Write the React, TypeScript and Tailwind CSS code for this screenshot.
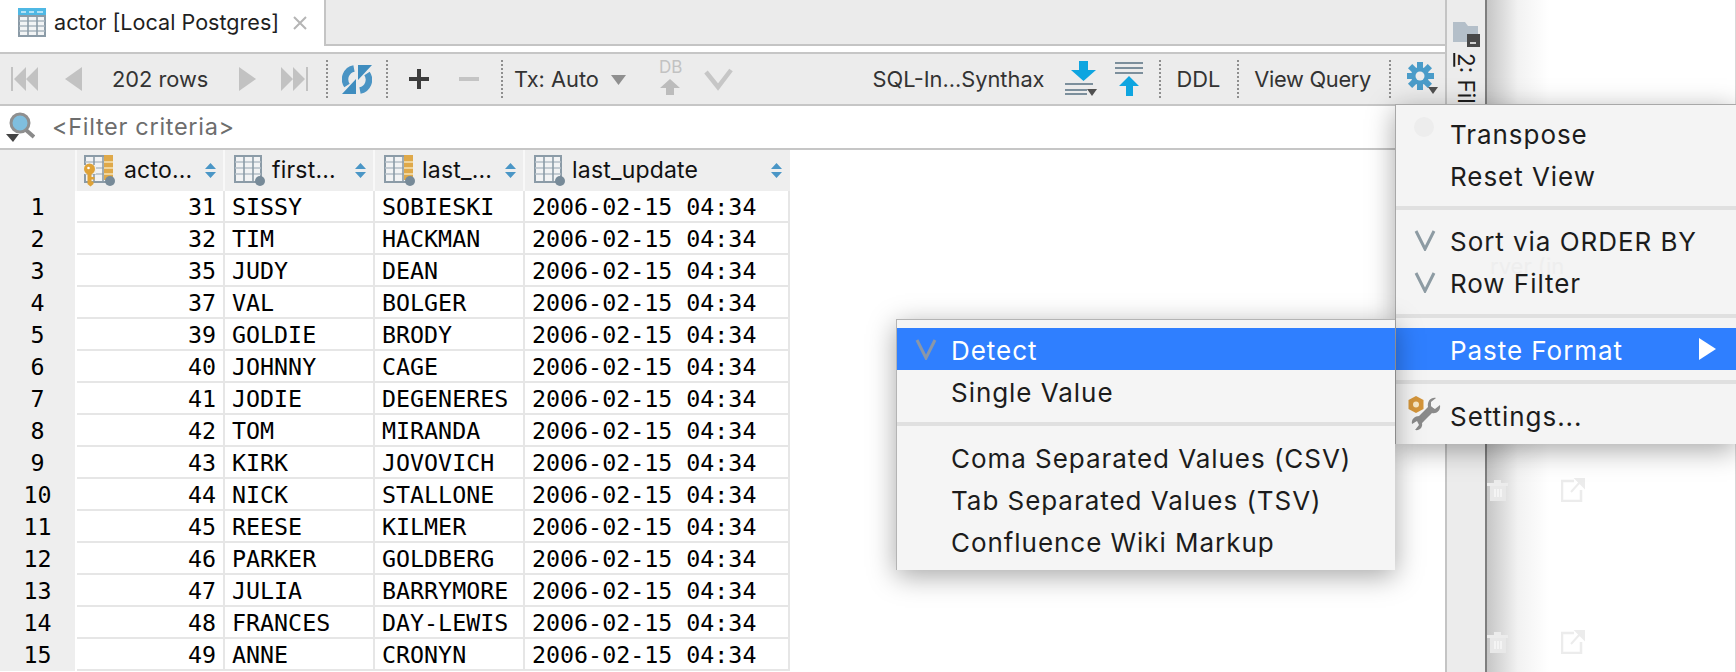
import React from 'react';

const rows = [
  [31, 'SISSY', 'SOBIESKI'],
  [32, 'TIM', 'HACKMAN'],
  [35, 'JUDY', 'DEAN'],
  [37, 'VAL', 'BOLGER'],
  [39, 'GOLDIE', 'BRODY'],
  [40, 'JOHNNY', 'CAGE'],
  [41, 'JODIE', 'DEGENERES'],
  [42, 'TOM', 'MIRANDA'],
  [43, 'KIRK', 'JOVOVICH'],
  [44, 'NICK', 'STALLONE'],
  [45, 'REESE', 'KILMER'],
  [46, 'PARKER', 'GOLDBERG'],
  [47, 'JULIA', 'BARRYMORE'],
  [48, 'FRANCES', 'DAY-LEWIS'],
  [49, 'ANNE', 'CRONYN'],
];

function TableIcon() {
  return (
    <svg width="28" height="29" viewBox="0 0 28 29" className="shrink-0">
      <rect x="0" y="0" width="28" height="8" fill="#4fb8e4" />
      <path d="M3 4h5M11 4h5M19 4h6" stroke="#d8f0fa" strokeWidth="1.5" />
      <rect x="1" y="8" width="26" height="20" fill="#f2f4f5" stroke="#8b9ba7" strokeWidth="2" />
      <path d="M1 13h26M1 18h26M1 23h26" stroke="#a9b5be" strokeWidth="1.6" />
      <path d="M10 8v20M19 8v20" stroke="#8b9ba7" strokeWidth="1.6" />
    </svg>
  );
}

function ColumnIcon({ keyed, marked }: { keyed?: boolean; marked?: boolean }) {
  return (
    <svg width="32" height="32" viewBox="0 0 32 32" className="shrink-0">
      <rect x="1" y="1" width="26" height="26" fill="#f2f3f4" stroke="#8b9ba7" strokeWidth="2" />
      <path d="M1 7h26M1 13h26M1 19h26" stroke="#b4bec6" strokeWidth="1.6" />
      <path d="M10 1v26M19 1v26" stroke="#8b9ba7" strokeWidth="1.6" />
      {marked && (
        <>
          <rect x="20" y="0" width="9" height="25" fill="#dfa94a" />
          <path d="M20 7h9M20 13h9M20 19h9" stroke="#f6e3b8" strokeWidth="1.6" />
        </>
      )}
      {keyed && (
        <>
          <rect x="0" y="10" width="12" height="9" fill="#eeeeee" />
          <circle cx="5.500" cy="14" r="5.500" fill="#dfa237" />
          <circle cx="4.500" cy="13" r="1.300" fill="#fff" />
          <path d="M3.500 17h4v5h3v2.500h-3v2h2V29l-3 2.500L3.500 29z" fill="#dfa237" />
        </>
      )}
      <circle cx="26" cy="26" r="5" fill="#778a98" />
    </svg>
  );
}

function SortIcon() {
  return (
    <svg width="11" height="15" viewBox="0 0 11 15" className="shrink-0">
      <path d="M5.5 0 11 6H0zM0 9h11l-5.5 6z" fill="#4a96c6" />
    </svg>
  );
}

function Dots() {
  return <div className="h-[38px] w-0 shrink-0 border-l-2 border-dotted border-[#8e8e8e]" />;
}

function Check({ color = '#8d9ba3' }: { color?: string }) {
  return (
    <svg width="22" height="22" viewBox="0 0 22 22">
      <path d="M2 2 11 20 20 2" fill="none" stroke={color} strokeWidth="3" />
    </svg>
  );
}

function MenuItem({
  label,
  active,
  check,
  icon,
  arrow,
  textLeft,
}: {
  label: string;
  active?: boolean;
  check?: boolean;
  icon?: React.ReactNode;
  arrow?: boolean;
  textLeft: string;
}) {
  return (
    <div
      className={`relative flex h-[42px] items-center pt-[2px] text-[26px] tracking-[0.95px] ${textLeft} ${
        active ? 'bg-[#2f7fff] text-white' : 'text-[#1c1c1c]'
      }`}
    >
      {check && (
        <span className="absolute left-[18px] top-[10px]">
          <Check color={active ? '#8a97a8' : '#8d9ba3'} />
        </span>
      )}
      {icon}
      {label}
      {arrow && (
        <svg width="17" height="22" viewBox="0 0 17 22" className="absolute right-[20px] top-[10px]">
          <path d="M0 0 17 11 0 22z" fill="#fff" />
        </svg>
      )}
    </div>
  );
}

function Trash() {
  return (
    <svg width="24" height="24" viewBox="0 0 24 24">
      <path d="M0 5h21v3H0zM7 2h7v3H7z" fill="#ececec" />
      <path d="M3 8h16v15H3z" fill="#e8e8e8" />
      <path d="M8 11v8M11 11v8M14 11v8" stroke="#f8f8f8" strokeWidth="1.5" />
    </svg>
  );
}

function External() {
  return (
    <svg width="24" height="24" viewBox="0 0 24 24">
      <path d="M13 3H1v20h19V12" fill="none" stroke="#ececec" strokeWidth="2.5" />
      <path d="M10 14 19 4M15 1h8v8z" fill="#ececec" stroke="#ececec" strokeWidth="2" />
    </svg>
  );
}

export default function App() {
  return (
    <div className="relative flex h-[672px] w-[1736px] overflow-hidden bg-white font-['Inter',sans-serif] text-[#2b2b2b]">
      {/* editor */}
      <div className="flex w-[1445px] shrink-0 flex-col">
        {/* tabs */}
        <div className="flex h-[46px] shrink-0">
          <div className="flex w-[324px] items-center bg-white pb-[2px] pl-[18px] text-[21.6px] text-[#1f1f1f]">
            <TableIcon />
            <span className="ml-[8px]">actor [Local Postgres]</span>
            <svg width="14" height="14" viewBox="0 0 14 14" className="ml-[14px] mt-[2px]">
              <path d="M1 1l12 12M13 1 1 13" stroke="#b5b5b5" strokeWidth="2" />
            </svg>
          </div>
          <div className="flex-1 border-b-2 border-l-2 border-[#c4c4c4] bg-[#ebebeb]" />
        </div>
        <div className="h-[6px] shrink-0 bg-white" />

        {/* toolbar */}
        <div className="flex h-[54px] shrink-0 items-center whitespace-nowrap border-y-2 border-[#c6c6c6] bg-[#ececec] text-[21.8px] text-[#333]">
          <svg width="27" height="24" viewBox="0 0 27 24" className="ml-[11px]">
            <path d="M0 0h2v24H0zM15 0v24L3 12zM27 0v24L15 12z" fill="#c2c2c2" />
          </svg>
          <svg width="17" height="24" viewBox="0 0 17 24" className="ml-[27px]">
            <path d="M17 0v24L0 12z" fill="#c2c2c2" />
          </svg>
          <span className="ml-[30px] w-[99px]">202 rows</span>
          <svg width="17" height="24" viewBox="0 0 17 24" className="ml-[28px]">
            <path d="M0 0v24l17-12z" fill="#c2c2c2" />
          </svg>
          <svg width="27" height="24" viewBox="0 0 27 24" className="ml-[25px]">
            <path d="M25 0h2v24h-2zM12 0v24l12-12zM0 0v24l12-12z" fill="#c2c2c2" />
          </svg>
          <div className="ml-[18px]"><Dots /></div>
          <svg width="30" height="31" viewBox="0 0 30 31" className="ml-[14px]">
            <path d="M12 4.500a11 11 0 0 0-7 17" fill="none" stroke="#4a94c4" strokeWidth="6.500" />
            <path d="M25 9.500a11 11 0 0 1-7 17" fill="none" stroke="#4a94c4" strokeWidth="6.500" />
            <path d="M16 1h14L16 16zM0 30h14V15z" fill="#3f8dbf" />
          </svg>
          <div className="ml-[14px]"><Dots /></div>
          <svg width="20" height="20" viewBox="0 0 20 20" className="ml-[21px]">
            <path d="M8 0h4v8h8v4h-8v8H8v-8H0V8h8z" fill="#3c3c3c" />
          </svg>
          <div className="ml-[30px] h-[4px] w-[20px] bg-[#c4c4c4]" />
          <div className="ml-[22px]"><Dots /></div>
          <span className="ml-[11px]">Tx: Auto</span>
          <svg width="15" height="10" viewBox="0 0 15 10" className="ml-[12px] mt-[2px]">
            <path d="M0 0h15L7.500 10z" fill="#8f8f8f" />
          </svg>
          <div className="relative ml-[33px] h-[36px] w-[24px]">
            <span className="absolute left-0 top-[-4px] text-[17px] leading-[20px] text-[#c2c2c2]">DB</span>
            <svg width="20" height="16" viewBox="0 0 20 16" className="absolute left-[1px] top-[18px]">
              <path d="M10 0 20 9h-6v7H6V9H0z" fill="#bcbcbc" />
            </svg>
          </div>
          <svg width="29" height="23" viewBox="0 0 29 23" className="ml-[21px]">
            <path d="M2 4 14 19 27 2" fill="none" stroke="#c6c6c6" strokeWidth="4.500" />
          </svg>
          <span className="ml-auto">SQL-In...Synthax</span>
          <svg width="32" height="36" viewBox="0 0 32 36" className="ml-[20px]">
            <path d="M14 0h9v9h8L18.500 20 6 9h8z" fill="#0ea5e0" />
            <path d="M0 23h28M0 29h22M0 33h22" stroke="#7c8f9c" strokeWidth="2" />
            <path d="M22 28h10l-5 7z" fill="#505050" />
          </svg>
          <svg width="28" height="34" viewBox="0 0 28 34" className="ml-[18px]">
            <path d="M0 1h28M0 6h28M0 11h28" stroke="#7c8f9c" strokeWidth="2" />
            <path d="M14 14 24 24h-6v10h-7V24H4z" fill="#0ea5e0" />
          </svg>
          <div className="ml-[16px]"><Dots /></div>
          <span className="ml-[16px]">DDL</span>
          <div className="ml-[17px]"><Dots /></div>
          <span className="ml-[15px] tracking-[-0.3px]">View Query</span>
          <div className="ml-[18px]"><Dots /></div>
          <svg width="32" height="34" viewBox="0 0 32 34" className="ml-[16px] mr-[6px]">
            <g fill="#4a9cc9">
              <circle cx="13" cy="14" r="9" />
              <rect x="10" y="0" width="6" height="28" />
              <rect x="-1" y="11" width="28" height="6" />
              <rect x="10" y="0" width="6" height="28" transform="rotate(45 13 14)" />
              <rect x="10" y="0" width="6" height="28" transform="rotate(-45 13 14)" />
            </g>
            <circle cx="13" cy="14" r="4.500" fill="#ececec" />
            <path d="M21 25h10l-5 7z" fill="#505050" />
          </svg>
        </div>

        {/* filter */}
        <div className="flex h-[44px] shrink-0 items-center border-b-2 border-[#c6c6c6] bg-white pl-[6px] text-[23.500px] tracking-[0.7px] text-[#6d6d6d]">
          <svg width="29" height="30" viewBox="0 0 29 30">
            <circle cx="14" cy="11" r="9" fill="#7fbede" stroke="#8f8f8f" strokeWidth="3" />
            <path d="M20 18 28 25" stroke="#8a8a8a" strokeWidth="4" />
            <path d="M0 22h13l-6 8z" fill="#444" />
          </svg>
          <span className="ml-[17px]">&lt;Filter criteria&gt;</span>
        </div>

        {/* grid */}
        <div className="w-[790px] shrink-0">
          <div className="grid h-[41px] grid-cols-[77px_148px_150px_150px_265px] bg-[#eeeeee] text-[23px] tracking-[0.2px] text-[#111]">
            <div className="border-r-2 border-[#f8f8f8]" />
            <div className="flex items-center border-r-2 border-[#f8f8f8] pl-[7px]">
              <ColumnIcon keyed marked />
              <span className="ml-[8px] flex-1">acto...</span>
              <span className="mr-[7px]"><SortIcon /></span>
            </div>
            <div className="flex items-center border-r-2 border-[#f8f8f8] pl-[9px]">
              <ColumnIcon />
              <span className="ml-[6px] flex-1">first...</span>
              <span className="mr-[7px]"><SortIcon /></span>
            </div>
            <div className="flex items-center border-r-2 border-[#f8f8f8] pl-[9px]">
              <ColumnIcon marked />
              <span className="ml-[6px] flex-1">last_...</span>
              <span className="mr-[7px]"><SortIcon /></span>
            </div>
            <div className="flex items-center pl-[9px]">
              <ColumnIcon />
              <span className="ml-[6px] flex-1">last_update</span>
              <span className="mr-[8px]"><SortIcon /></span>
            </div>
          </div>
          {rows.map((r, i) => (
            <div
              key={r[0]}
              className="grid h-[32px] grid-cols-[77px_148px_150px_150px_265px] border-b-2 border-[#e6e6e6] font-['DejaVu_Sans_Mono',monospace] text-[23.3px] leading-[32px] text-black"
            >
              <div className="border-r-2 border-white bg-[#eeeeee] text-center">{i + 1}</div>
              <div className="border-r-2 border-[#e6e6e6] pr-[7px] text-right">{r[0]}</div>
              <div className="border-r-2 border-[#e6e6e6] pl-[7px]">{r[1]}</div>
              <div className="border-r-2 border-[#e6e6e6] pl-[7px]">{r[2]}</div>
              <div className="border-r-2 border-[#e6e6e6] pl-[7px]">2006-02-15 04:34</div>
            </div>
          ))}
        </div>
      </div>

      {/* tool window stripe */}
      <div className="flex w-[42px] shrink-0 flex-col items-center border-x-2 border-l-[#c4c4c4] border-r-[#7f7f7f] bg-[#ececec] pt-[20px]">
        <svg width="27" height="28" viewBox="0 0 27 28">
          <path d="M0 2h12l3 4h10v16H0z" fill="#b4bfc9" />
          <rect x="14" y="14" width="13" height="13" fill="#484848" />
          <path d="M17 23h6" stroke="#fff" strokeWidth="1.500" />
        </svg>
        <span className="mt-[5px] text-[22.5px] leading-none text-[#1c1c1c] [writing-mode:vertical-rl]">
          <span className="underline">2</span>: Files
        </span>
      </div>

      {/* desktop behind */}
      <div className="relative flex-1 border-r border-[#d8d8d8] bg-white">
        <div className="h-full w-[62px] bg-gradient-to-r from-[#c6c6c6] via-[#f2f2f2] to-white" />
        <span className="absolute left-[0px] top-[478px]"><Trash /></span>
        <span className="absolute left-[0px] top-[630px]"><Trash /></span>
        <span className="absolute left-[74px] top-[478px]"><External /></span>
        <span className="absolute left-[74px] top-[630px]"><External /></span>
      </div>

      {/* options popup */}
      <div className="absolute left-[1395px] top-[104px] h-[340px] w-[341px] border-l border-t border-[#a8a8a8] bg-[#f4f4f4] pt-[7px] shadow-[0_6px_26px_rgba(0,0,0,0.35)]">
        <span className="absolute left-[18px] top-[12px] h-[20px] w-[20px] rounded-full bg-[#ededed]" />
        <span className="absolute left-[94px] top-[156px] text-[22px] leading-[10px] text-[#eeeeee]">rver (in</span>
        <MenuItem label="Transpose" textLeft="pl-[54px]" />
        <MenuItem label="Reset View" textLeft="pl-[54px]" />
        <div className="mb-[9px] mt-[10px] h-[4px] bg-[#e0e0e0]" />
        <MenuItem label="Sort via ORDER BY" check textLeft="pl-[54px]" />
        <MenuItem label="Row Filter" check textLeft="pl-[54px]" />
        <div className="mb-[10px] mt-[11px] h-[4px] bg-[#e0e0e0]" />
        <MenuItem label="Paste Format" active arrow textLeft="pl-[54px]" />
        <div className="mb-[10px] mt-[10px] h-[4px] bg-[#e0e0e0]" />
        <MenuItem
          label="Settings..."
          textLeft="pl-[54px]"
          icon={
            <svg width="34" height="36" viewBox="0 0 34 36" className="absolute left-[12px] top-[1px]">
              <path d="M8 1l7.500 4v9L8 18 .500 14V5z" fill="#d4953a" />
              <circle cx="8" cy="9.500" r="3" fill="#f7e7c4" />
              <path d="M12 26 24 12" stroke="#8a8a8a" strokeWidth="5" />
              <path d="M28 3l-5 4v5l4 2 5-4c1 6-4 9-8 8L14 28c1 4-2 8-7 7l4-5-2-4-5 3c-1-5 3-8 7-8l9-9c-1-6 3-10 8-9z" fill="#8a8a8a" />
            </svg>
          }
        />
      </div>

      {/* paste format submenu */}
      <div className="absolute left-[896px] top-[319px] h-[251px] w-[499px] border-l border-t border-[#b4b4b4] bg-[#f5f5f5] pt-[8px] shadow-[0_6px_26px_rgba(0,0,0,0.35)]">
        <MenuItem label="Detect" active check textLeft="pl-[54px]" />
        <MenuItem label="Single Value" textLeft="pl-[54px]" />
        <div className="my-[10px] h-[4px] bg-[#e0e0e0]" />
        <MenuItem label="Coma Separated Values (CSV)" textLeft="pl-[54px]" />
        <MenuItem label="Tab Separated Values (TSV)" textLeft="pl-[54px]" />
        <MenuItem label="Confluence Wiki Markup" textLeft="pl-[54px]" />
      </div>
    </div>
  );
}
